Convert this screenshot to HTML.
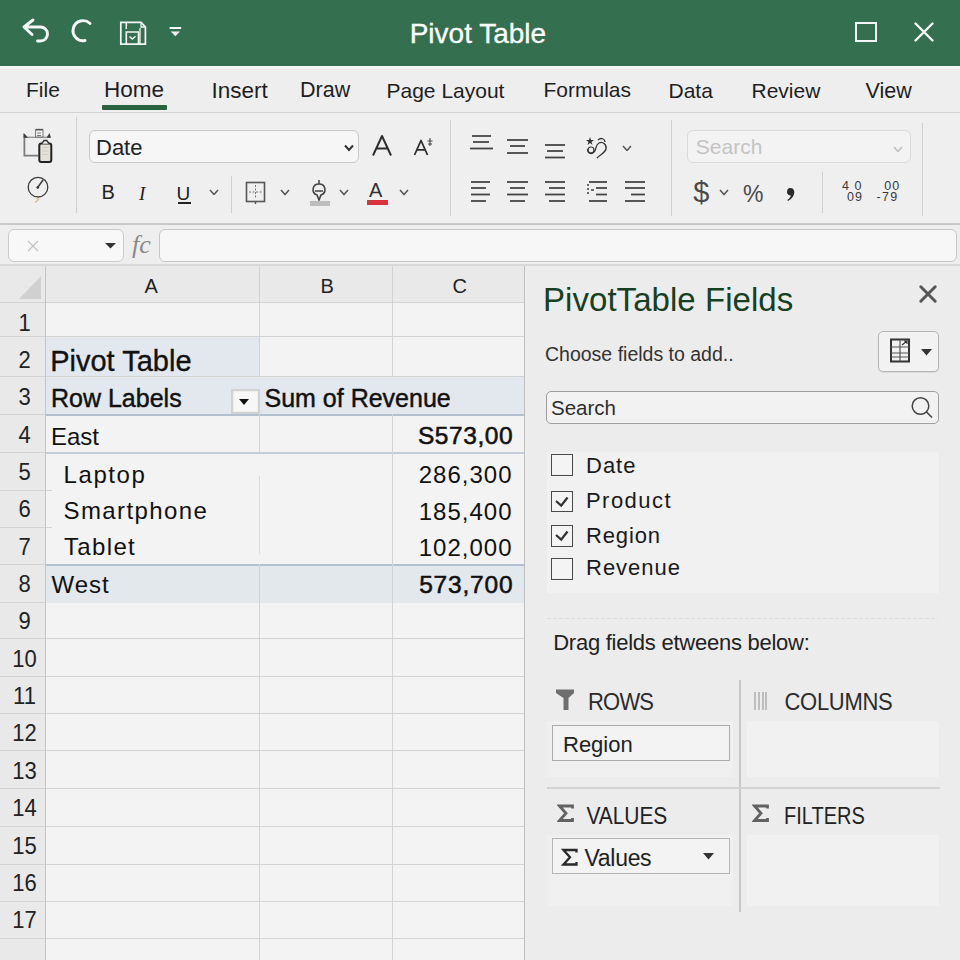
<!DOCTYPE html>
<html><head><meta charset="utf-8"><style>
html,body{margin:0;padding:0;width:960px;height:960px;overflow:hidden;background:#ebebeb}
body{position:relative;font-family:"Liberation Sans",sans-serif}
.t{position:absolute;line-height:1;white-space:pre;font-family:"Liberation Sans",sans-serif}
.r{position:absolute}
</style></head><body>
<div class="r" style="left:0px;top:0px;width:960px;height:66px;background:#346f50"></div>
<svg class="r" style="left:20px;top:16px;" width="34" height="30" viewBox="0 0 34 30"><path d="M13 4 L4 11 L12 18.5 M4 11 H20.5 A7 7 0 0 1 20.5 25 H17.5" fill="none" stroke="#f4f7f5" stroke-width="2.9" stroke-linecap="round" stroke-linejoin="round"/></svg>
<svg class="r" style="left:68px;top:16px;" width="30" height="30" viewBox="0 0 30 30"><path d="M22 7.5 A10 10 0 1 0 17 24.5" fill="none" stroke="#f4f7f5" stroke-width="2.9" stroke-linecap="round"/></svg>
<svg class="r" style="left:117px;top:19px;" width="32" height="28" viewBox="0 0 32 28"><path d="M3.8 3.4 H24 L28.4 7.8 V25.1 H3.8 Z" fill="none" stroke="#f4f7f5" stroke-width="1.7"/><path d="M24 3.4 V8 H28.4" fill="none" stroke="#f4f7f5" stroke-width="1.3"/><path d="M9.3 3.4 V10" stroke="#f4f7f5" stroke-width="1.5" fill="none"/><path d="M23 9 V25" stroke="#f4f7f5" stroke-width="1.3" fill="none"/><path d="M9.3 25.1 V13 H21.5 V25.1" fill="none" stroke="#f4f7f5" stroke-width="1.6"/><path d="M12.5 17.5 L15.3 20 L18.5 17.2" stroke="#f4f7f5" stroke-width="1.4" fill="none"/></svg>
<svg class="r" style="left:168px;top:24px;" width="16" height="14" viewBox="0 0 16 14"><rect x="1.6" y="3" width="11.6" height="2" fill="#f4f7f5"/><path d="M2.8 7.6 H12 L7.4 12.2 Z" fill="#f4f7f5"/></svg>
<div class="t" style="left:409.7px;top:19.8px;font-size:28px;color:#ffffff;font-weight:400;letter-spacing:0px;-webkit-text-stroke:0.3px #fff">Pivot Table</div>
<div class="r" style="left:855px;top:22px;width:22px;height:20px;border:2.5px solid #f4f7f5;box-sizing:border-box"></div>
<svg class="r" style="left:912px;top:20px;" width="24" height="24" viewBox="0 0 24 24"><path d="M3.5 3.5 L20.5 20.5 M20.5 3.5 L3.5 20.5" stroke="#f4f7f5" stroke-width="2.4" stroke-linecap="round"/></svg>
<div class="r" style="left:0px;top:66px;width:960px;height:46px;background:#eeeeee"></div>
<div class="r" style="left:0px;top:66px;width:960px;height:2px;background:#f8f8f8"></div>
<div class="r" style="left:0px;top:111.5px;width:960px;height:1.5px;background:#d2d2d2"></div>
<div class="t" style="left:26.0px;top:78.5px;font-size:21px;color:#1e1e1e;font-weight:400;letter-spacing:0px;">File</div>
<div class="t" style="left:104.0px;top:79.2px;font-size:22.5px;color:#1e1e1e;font-weight:400;letter-spacing:0px;">Home</div>
<div class="t" style="left:211.5px;top:79.5px;font-size:22.5px;color:#1e1e1e;font-weight:400;letter-spacing:0px;">Insert</div>
<div class="t" style="left:300.0px;top:80.4px;font-size:21.5px;color:#1e1e1e;font-weight:400;letter-spacing:0px;">Draw</div>
<div class="t" style="left:386.5px;top:79.5px;font-size:21px;color:#1e1e1e;font-weight:400;letter-spacing:0px;">Page Layout</div>
<div class="t" style="left:543.5px;top:78.7px;font-size:21px;color:#1e1e1e;font-weight:400;letter-spacing:0px;">Formulas</div>
<div class="t" style="left:668.5px;top:79.5px;font-size:21px;color:#1e1e1e;font-weight:400;letter-spacing:0px;">Data</div>
<div class="t" style="left:751.5px;top:79.5px;font-size:21px;color:#1e1e1e;font-weight:400;letter-spacing:0px;">Review</div>
<div class="t" style="left:865.5px;top:80.6px;font-size:21.5px;color:#1e1e1e;font-weight:400;letter-spacing:0px;">View</div>
<div class="r" style="left:102px;top:105px;width:65px;height:5px;background:#28623f;border-radius:1px"></div>
<div class="r" style="left:0px;top:113px;width:960px;height:111px;background:#efefef"></div>
<div class="r" style="left:0px;top:223.3px;width:960px;height:1.5px;background:#c9c9c9"></div>
<div class="r" style="left:76px;top:117px;width:1px;height:96px;background:#cfcfcf"></div>
<div class="r" style="left:231px;top:176px;width:1px;height:37px;background:#cfcfcf"></div>
<div class="r" style="left:450px;top:120px;width:1px;height:96px;background:#cfcfcf"></div>
<div class="r" style="left:671px;top:120px;width:1px;height:96px;background:#cfcfcf"></div>
<div class="r" style="left:822px;top:172px;width:1px;height:41px;background:#cfcfcf"></div>
<div class="r" style="left:922px;top:123px;width:1px;height:93px;background:#cfcfcf"></div>
<svg class="r" style="left:20px;top:125px;" width="36" height="40" viewBox="0 0 36 40"><path d="M4.4 9 V30.6 H18.5" fill="none" stroke="#7c7c7c" stroke-width="1.8"/><path d="M5 12.3 H30" stroke="#8a8a8a" stroke-width="1.2"/><path d="M3.6 8 L8.2 12.8 H3.6 Z" fill="#3c3c3c"/><path d="M29.5 8 L31 12.8 H26.5 Z" fill="#3c3c3c"/><rect x="15.5" y="5" width="7.5" height="7" fill="#f4f4f4" stroke="#777" stroke-width="1"/><path d="M15.5 4.5 H23" stroke="#555" stroke-width="1.3"/><path d="M17 8 H21 M17 10.5 H21" stroke="#666" stroke-width="0.9"/><rect x="19.3" y="18.5" width="12" height="18.5" rx="2" fill="#e4e1da" stroke="#222" stroke-width="2"/><path d="M21.8 18.7 L24 15.5 H26.8 L29 18.7" fill="#eee" stroke="#333" stroke-width="1.4"/><path d="M22 22.5 H28.5 M22 26 H28.5 M22 29.5 H28.5" stroke="#d0ccc2" stroke-width="1"/></svg>
<svg class="r" style="left:25px;top:174px;" width="28" height="32" viewBox="0 0 28 32"><circle cx="13" cy="13.2" r="9.8" fill="none" stroke="#3a3a3a" stroke-width="1.3"/><path d="M12.6 13.6 L18 6" stroke="#3a3a3a" stroke-width="1.6"/><circle cx="12.8" cy="13.4" r="1.3" fill="#333"/><path d="M11 23.5 L13.6 25.5 L10 28.5" stroke="#dcc09a" stroke-width="1.4" fill="none"/></svg>
<div class="r" style="left:89px;top:130px;width:270px;height:33px;background:#f6f6f6;border:1.3px solid #c9c9c9;border-radius:6px;box-sizing:border-box"></div>
<div class="t" style="left:96.0px;top:137.3px;font-size:22px;color:#222;font-weight:400;letter-spacing:0px;">Date</div>
<svg class="r" style="left:343px;top:143px;" width="12" height="10" viewBox="0 0 12 10"><path d="M2 2.5 L6 7 L10 2.5" stroke="#333" stroke-width="2" fill="none"/></svg>
<svg class="r" style="left:370px;top:133px;" width="24" height="26" viewBox="0 0 24 26"><path d="M3 22.5 L12 3 L21 22.5 M6.3 15.5 H17.7" fill="none" stroke="#2e2e2e" stroke-width="2" stroke-linejoin="round"/></svg>
<svg class="r" style="left:412px;top:138px;" width="18" height="19" viewBox="0 0 18 19"><path d="M2.5 17 L9 2.5 L15.5 17 M5 11.8 H13" fill="none" stroke="#2e2e2e" stroke-width="1.8" stroke-linejoin="round"/></svg>
<svg class="r" style="left:426px;top:137px;" width="8" height="10" viewBox="0 0 8 10"><path d="M4 1 V9 M1.5 4 H6.5 M2 7 H6" stroke="#444" stroke-width="1.1"/></svg>
<div class="t" style="left:101.5px;top:182.0px;font-size:20px;color:#222;font-weight:400;letter-spacing:0px;">B</div>
<div class="t" style="left:139.0px;top:183.9px;font-size:19px;color:#222;font-weight:400;letter-spacing:0px;font-style:italic;font-family:'Liberation Serif',serif">I</div>
<div class="t" style="left:176.5px;top:183.9px;font-size:19px;color:#222;font-weight:400;letter-spacing:0px;">U</div>
<div class="r" style="left:178px;top:202px;width:13px;height:1.5px;background:#222"></div>
<svg class="r" style="left:208.5px;top:188.5px;" width="10" height="6.5" viewBox="0 0 10 6.5"><path d="M1 1 L5.0 5.5 L9 1" stroke="#555" stroke-width="1.5" fill="none"/></svg>
<svg class="r" style="left:245px;top:181px;" width="22" height="24" viewBox="0 0 22 24"><rect x="1.5" y="1.5" width="18" height="19" fill="none" stroke="#555" stroke-width="1.6"/><path d="M10.5 4 V18 M4 11 H17" stroke="#777" stroke-width="1" stroke-dasharray="2 1.5"/><path d="M10.5 20.5 V23" stroke="#555" stroke-width="1.4"/></svg>
<svg class="r" style="left:280px;top:189px;" width="10" height="6.5" viewBox="0 0 10 6.5"><path d="M1 1 L5.0 5.5 L9 1" stroke="#555" stroke-width="1.5" fill="none"/></svg>
<svg class="r" style="left:308px;top:178px;" width="24" height="30" viewBox="0 0 24 30"><path d="M11 2 V6" stroke="#444" stroke-width="1.5"/><path d="M11 6 C4 6 3 15 9 17 L11 22 L13 17 C19 15 18 6 11 6 Z" fill="none" stroke="#444" stroke-width="1.6"/><path d="M7 13 H15" stroke="#444" stroke-width="1.5"/><rect x="2" y="23" width="20" height="5" fill="#bdbdbd"/></svg>
<svg class="r" style="left:338.5px;top:189px;" width="10" height="6.5" viewBox="0 0 10 6.5"><path d="M1 1 L5.0 5.5 L9 1" stroke="#555" stroke-width="1.5" fill="none"/></svg>
<div class="t" style="left:369.0px;top:180.1px;font-size:20px;color:#333;font-weight:400;letter-spacing:0px;">A</div>
<div class="r" style="left:367px;top:200px;width:21px;height:4.5px;background:#d9343c"></div>
<svg class="r" style="left:398.5px;top:189px;" width="10" height="6.5" viewBox="0 0 10 6.5"><path d="M1 1 L5.0 5.5 L9 1" stroke="#555" stroke-width="1.5" fill="none"/></svg>
<svg class="r" style="left:0px;top:0px;pointer-events:none" width="960" height="960" viewBox="0 0 960 960"><path d="M472 136 H491" stroke="#444" stroke-width="1.8"/><path d="M473 142 H489" stroke="#444" stroke-width="1.8"/><path d="M470 148.5 H493" stroke="#444" stroke-width="1.8"/></svg>
<svg class="r" style="left:0px;top:0px;pointer-events:none" width="960" height="960" viewBox="0 0 960 960"><path d="M507 140 H528" stroke="#444" stroke-width="1.8"/><path d="M510 146 H525" stroke="#444" stroke-width="1.8"/><path d="M507 153 H528" stroke="#444" stroke-width="1.8"/></svg>
<svg class="r" style="left:0px;top:0px;pointer-events:none" width="960" height="960" viewBox="0 0 960 960"><path d="M545 145 H565" stroke="#444" stroke-width="1.8"/><path d="M547 151 H563" stroke="#444" stroke-width="1.8"/><path d="M545 157.5 H565" stroke="#444" stroke-width="1.8"/></svg>
<svg class="r" style="left:0px;top:0px;pointer-events:none" width="960" height="960" viewBox="0 0 960 960"><path d="M471 182 H490" stroke="#444" stroke-width="1.8"/><path d="M471 188 H486" stroke="#444" stroke-width="1.8"/><path d="M471 194.5 H490" stroke="#444" stroke-width="1.8"/><path d="M471 201 H486" stroke="#444" stroke-width="1.8"/></svg>
<svg class="r" style="left:0px;top:0px;pointer-events:none" width="960" height="960" viewBox="0 0 960 960"><path d="M507 182 H528" stroke="#444" stroke-width="1.8"/><path d="M510 188 H525" stroke="#444" stroke-width="1.8"/><path d="M507 194.5 H528" stroke="#444" stroke-width="1.8"/><path d="M510 201 H525" stroke="#444" stroke-width="1.8"/></svg>
<svg class="r" style="left:0px;top:0px;pointer-events:none" width="960" height="960" viewBox="0 0 960 960"><path d="M545 182 H565" stroke="#444" stroke-width="1.8"/><path d="M549 188 H565" stroke="#444" stroke-width="1.8"/><path d="M545 194.5 H565" stroke="#444" stroke-width="1.8"/><path d="M549 201 H565" stroke="#444" stroke-width="1.8"/></svg>
<svg class="r" style="left:0px;top:0px;pointer-events:none" width="960" height="960" viewBox="0 0 960 960"><path d="M589 182 H607" stroke="#444" stroke-width="1.8"/><path d="M596 188 H607" stroke="#444" stroke-width="1.8"/><path d="M596 194.5 H607" stroke="#444" stroke-width="1.8"/><path d="M589 201 H607" stroke="#444" stroke-width="1.8"/></svg>
<svg class="r" style="left:0px;top:0px;pointer-events:none" width="960" height="960" viewBox="0 0 960 960"><path d="M625 182 H645" stroke="#444" stroke-width="1.8"/><path d="M625 188 H645" stroke="#444" stroke-width="1.8"/><path d="M631 194.5 H645" stroke="#444" stroke-width="1.8"/><path d="M625 201 H645" stroke="#444" stroke-width="1.8"/></svg>
<svg class="r" style="left:587px;top:183px;" width="8" height="14" viewBox="0 0 8 14"><path d="M1 1 V3 M1 5 V7 M1 9 V11 M4 7 H7" stroke="#444" stroke-width="1.6"/></svg>
<svg class="r" style="left:584px;top:133px;" width="28" height="27" viewBox="0 0 28 27"><path d="M6 4 L7 7 L10 7 L7.5 9 L8.5 12 L6 10 L3.5 12 L4.5 9 L2 7 L5 7 Z" fill="#333"/><path d="M4 16 C3 20 7 22 10 19 C13 16 11 12 15 10 C19 8 23 12 22 16 C21 20 17 21 13 25" fill="none" stroke="#333" stroke-width="1.3"/><path d="M14 7 C17 4 21 6 21 9" fill="none" stroke="#333" stroke-width="1.3"/><circle cx="7" cy="17" r="3" fill="none" stroke="#333" stroke-width="1.2"/></svg>
<svg class="r" style="left:621.5px;top:144.5px;" width="10" height="6.5" viewBox="0 0 10 6.5"><path d="M1 1 L5.0 5.5 L9 1" stroke="#555" stroke-width="1.5" fill="none"/></svg>
<div class="r" style="left:687px;top:130px;width:224px;height:33px;background:#f3f3f3;border:1.2px solid #dadada;border-radius:6px;box-sizing:border-box"></div>
<div class="t" style="left:695.8px;top:136.4px;font-size:21px;color:#c4c4c4;font-weight:400;letter-spacing:0px;">Search</div>
<svg class="r" style="left:893px;top:146px;" width="10" height="6.5" viewBox="0 0 10 6.5"><path d="M1 1 L5.0 5.5 L9 1" stroke="#bbb" stroke-width="1.4" fill="none"/></svg>
<div class="t" style="left:693.3px;top:178.2px;font-size:29px;color:#4a4a4a;font-weight:400;letter-spacing:0px;">$</div>
<svg class="r" style="left:719px;top:189px;" width="10" height="6.5" viewBox="0 0 10 6.5"><path d="M1 1 L5.0 5.5 L9 1" stroke="#555" stroke-width="1.5" fill="none"/></svg>
<div class="t" style="left:743.0px;top:183.1px;font-size:23px;color:#4a4a4a;font-weight:400;letter-spacing:0px;">%</div>
<svg class="r" style="left:783px;top:185px;" width="16" height="18" viewBox="0 0 16 18"><path d="M6.5 3 C9.5 2.5 11.5 4.5 11.3 7.5 C11 11 9 14 5 16 L4.3 15 C6.5 13.5 7.6 12 7.8 10.5 C5.5 10.5 4 9 4 7 C4 4.8 5 3.3 6.5 3 Z" fill="#2a2a2a"/></svg>
<div class="t" style="left:842.0px;top:180.1px;font-size:12.5px;color:#3a3a3a;font-weight:400;letter-spacing:1.0px;">4 0</div>
<div class="t" style="left:847.0px;top:190.6px;font-size:12.5px;color:#3a3a3a;font-weight:400;letter-spacing:1.0px;">09</div>
<div class="t" style="left:884.3px;top:180.1px;font-size:12.5px;color:#3a3a3a;font-weight:400;letter-spacing:1.0px;">00</div>
<div class="t" style="left:876.5px;top:190.6px;font-size:12.5px;color:#3a3a3a;font-weight:400;letter-spacing:1.3px;">-79</div>
<div class="r" style="left:0px;top:225px;width:960px;height:40px;background:#eeeeee"></div>
<div class="r" style="left:0px;top:264px;width:960px;height:2px;background:#d9d9d9"></div>
<div class="r" style="left:7.5px;top:229px;width:116.5px;height:33px;background:#f8f8f8;border:1.3px solid #cbcbcb;border-radius:6px;box-sizing:border-box"></div>
<svg class="r" style="left:26px;top:239px;" width="14" height="14" viewBox="0 0 14 14"><path d="M2 2 L12 12 M12 2 L2 12" stroke="#c5c5c5" stroke-width="1.4"/></svg>
<svg class="r" style="left:104px;top:242px;" width="13" height="7" viewBox="0 0 13 7"><path d="M1 1 H12 L6.5 6.5 Z" fill="#333"/></svg>
<div class="t" style="left:132.0px;top:232.2px;font-size:26px;color:#8a8a8a;font-weight:400;letter-spacing:0px;font-style:italic;font-family:'Liberation Serif',serif">fc</div>
<div class="r" style="left:159px;top:228.5px;width:798px;height:33.5px;background:#f7f7f7;border:1.3px solid #c6c6c6;border-radius:6px;box-sizing:border-box"></div>
<div class="r" style="left:0px;top:266px;width:525px;height:694px;background:#f3f3f3"></div>
<div class="r" style="left:0px;top:266px;width:525px;height:36px;background:#e9e9e9"></div>
<div class="r" style="left:0px;top:266px;width:45px;height:694px;background:#e9e9e9"></div>
<svg class="r" style="left:18px;top:275px;" width="24" height="25" viewBox="0 0 24 25"><path d="M23 1 V24 H1 Z" fill="#d0d0d0"/></svg>
<div class="r" style="left:46px;top:337px;width:213px;height:39px;background:#e2e8ed"></div>
<div class="r" style="left:46px;top:377px;width:478px;height:37px;background:#e2e8ed"></div>
<div class="r" style="left:46px;top:565px;width:478px;height:38px;background:#e3e8ec"></div>
<div class="r" style="left:0px;top:302px;width:524px;height:1px;background:#d3d3d3"></div>
<div class="r" style="left:0px;top:336px;width:524px;height:1px;background:#d3d3d3"></div>
<div class="r" style="left:0px;top:376px;width:524px;height:1px;background:#d3d3d3"></div>
<div class="r" style="left:0px;top:414px;width:46px;height:1px;background:#d3d3d3"></div>
<div class="r" style="left:46px;top:414px;width:478px;height:1.5px;background:#b5c0ce"></div>
<div class="r" style="left:0px;top:452px;width:46px;height:1px;background:#d3d3d3"></div>
<div class="r" style="left:46px;top:452px;width:478px;height:1.5px;background:#c3ccd8"></div>
<div class="r" style="left:0px;top:490px;width:52px;height:1px;background:#d3d3d3"></div>
<div class="r" style="left:0px;top:527px;width:52px;height:1px;background:#d3d3d3"></div>
<div class="r" style="left:0px;top:564px;width:46px;height:1px;background:#d3d3d3"></div>
<div class="r" style="left:46px;top:564px;width:478px;height:1.5px;background:#b5c0ce"></div>
<div class="r" style="left:0px;top:602px;width:46px;height:1px;background:#d3d3d3"></div>
<div class="r" style="left:0px;top:638px;width:524px;height:1px;background:#d3d3d3"></div>
<div class="r" style="left:0px;top:676px;width:524px;height:1px;background:#d3d3d3"></div>
<div class="r" style="left:0px;top:713px;width:524px;height:1px;background:#d3d3d3"></div>
<div class="r" style="left:0px;top:750px;width:524px;height:1px;background:#d3d3d3"></div>
<div class="r" style="left:0px;top:788px;width:524px;height:1px;background:#d3d3d3"></div>
<div class="r" style="left:0px;top:826px;width:524px;height:1px;background:#d3d3d3"></div>
<div class="r" style="left:0px;top:864px;width:524px;height:1px;background:#d3d3d3"></div>
<div class="r" style="left:0px;top:901px;width:524px;height:1px;background:#d3d3d3"></div>
<div class="r" style="left:0px;top:938px;width:524px;height:1px;background:#d3d3d3"></div>
<div class="r" style="left:45px;top:266px;width:1.2999999999999972px;height:694px;background:#c4c4c4"></div>
<div class="r" style="left:259px;top:266px;width:1px;height:111px;background:#d3d3d3"></div>
<div class="r" style="left:259px;top:414px;width:1px;height:39px;background:#d3d3d3"></div>
<div class="r" style="left:259px;top:476px;width:1px;height:78px;background:#dcdcdc"></div>
<div class="r" style="left:259px;top:564px;width:1px;height:396px;background:#d3d3d3"></div>
<div class="r" style="left:392px;top:266px;width:1px;height:111px;background:#d3d3d3"></div>
<div class="r" style="left:392px;top:414px;width:1px;height:546px;background:#d3d3d3"></div>
<div class="r" style="left:524px;top:266px;width:1.2000000000000455px;height:694px;background:#bfbfbf"></div>
<div class="t" style="left:144.5px;top:276.3px;font-size:20px;color:#222;font-weight:400;letter-spacing:0px;">A</div>
<div class="t" style="left:320.5px;top:276.3px;font-size:20px;color:#222;font-weight:400;letter-spacing:0px;">B</div>
<div class="t" style="left:452.5px;top:276.3px;font-size:20px;color:#222;font-weight:400;letter-spacing:0px;">C</div>
<div class="t" style="left:0;width:49px;text-align:center;top:312.6px;font-size:22px;color:#222;transform:scaleY(1.1);transform-origin:50% 84.6%">1</div>
<div class="t" style="left:0;width:49px;text-align:center;top:349.9px;font-size:22px;color:#222;transform:scaleY(1.1);transform-origin:50% 84.6%">2</div>
<div class="t" style="left:0;width:49px;text-align:center;top:387.3px;font-size:22px;color:#222;transform:scaleY(1.1);transform-origin:50% 84.6%">3</div>
<div class="t" style="left:0;width:49px;text-align:center;top:424.6px;font-size:22px;color:#222;transform:scaleY(1.1);transform-origin:50% 84.6%">4</div>
<div class="t" style="left:0;width:49px;text-align:center;top:462.0px;font-size:22px;color:#222;transform:scaleY(1.1);transform-origin:50% 84.6%">5</div>
<div class="t" style="left:0;width:49px;text-align:center;top:499.3px;font-size:22px;color:#222;transform:scaleY(1.1);transform-origin:50% 84.6%">6</div>
<div class="t" style="left:0;width:49px;text-align:center;top:536.7px;font-size:22px;color:#222;transform:scaleY(1.1);transform-origin:50% 84.6%">7</div>
<div class="t" style="left:0;width:49px;text-align:center;top:574.0px;font-size:22px;color:#222;transform:scaleY(1.1);transform-origin:50% 84.6%">8</div>
<div class="t" style="left:0;width:49px;text-align:center;top:611.4px;font-size:22px;color:#222;transform:scaleY(1.1);transform-origin:50% 84.6%">9</div>
<div class="t" style="left:0;width:49px;text-align:center;top:648.7px;font-size:22px;color:#222;transform:scaleY(1.1);transform-origin:50% 84.6%">10</div>
<div class="t" style="left:0;width:49px;text-align:center;top:686.1px;font-size:22px;color:#222;transform:scaleY(1.1);transform-origin:50% 84.6%">11</div>
<div class="t" style="left:0;width:49px;text-align:center;top:723.4px;font-size:22px;color:#222;transform:scaleY(1.1);transform-origin:50% 84.6%">12</div>
<div class="t" style="left:0;width:49px;text-align:center;top:760.8px;font-size:22px;color:#222;transform:scaleY(1.1);transform-origin:50% 84.6%">13</div>
<div class="t" style="left:0;width:49px;text-align:center;top:798.1px;font-size:22px;color:#222;transform:scaleY(1.1);transform-origin:50% 84.6%">14</div>
<div class="t" style="left:0;width:49px;text-align:center;top:835.5px;font-size:22px;color:#222;transform:scaleY(1.1);transform-origin:50% 84.6%">15</div>
<div class="t" style="left:0;width:49px;text-align:center;top:872.8px;font-size:22px;color:#222;transform:scaleY(1.1);transform-origin:50% 84.6%">16</div>
<div class="t" style="left:0;width:49px;text-align:center;top:910.2px;font-size:22px;color:#222;transform:scaleY(1.1);transform-origin:50% 84.6%">17</div>
<div class="t" style="left:50.2px;top:346.5px;font-size:29px;color:#111;font-weight:400;letter-spacing:0px;-webkit-text-stroke:0.35px #111">Pivot Table</div>
<div class="t" style="left:51.0px;top:386.0px;font-size:25px;color:#111;font-weight:400;letter-spacing:0px;-webkit-text-stroke:0.45px #111">Row Labels</div>
<div class="r" style="left:230.5px;top:388.5px;width:29.0px;height:25.0px;background:#f7f7f7;border:2.2px solid #d2d2d2;box-sizing:border-box;box-shadow:inset 0 0 0 0.6px #e6e6e6"></div>
<svg class="r" style="left:238px;top:398px;" width="12" height="8" viewBox="0 0 12 8"><path d="M1 1 H11 L6 7 Z" fill="#111"/></svg>
<div class="t" style="left:264.5px;top:386.0px;font-size:25px;color:#111;font-weight:400;letter-spacing:0px;-webkit-text-stroke:0.45px #111">Sum of Revenue</div>
<div class="t" style="left:51.0px;top:424.8px;font-size:24px;color:#111;font-weight:400;letter-spacing:0px;">East</div>
<div class="t" style="right:446.9px;top:424.2px;font-size:24.5px;color:#111;font-weight:400;letter-spacing:0.55px;-webkit-text-stroke:0.55px #111">S573,00</div>
<div class="t" style="left:63.5px;top:462.6px;font-size:24px;color:#111;font-weight:400;letter-spacing:1.6px;">Laptop</div>
<div class="t" style="left:63.5px;top:499.1px;font-size:24px;color:#111;font-weight:400;letter-spacing:1.4px;">Smartphone</div>
<div class="t" style="left:64.0px;top:535.0px;font-size:24px;color:#111;font-weight:400;letter-spacing:1.35px;">Tablet</div>
<div class="t" style="left:51.5px;top:573.3px;font-size:24px;color:#111;font-weight:400;letter-spacing:1.0px;">West</div>
<div class="t" style="right:447.5px;top:462.8px;font-size:24px;color:#111;font-weight:400;letter-spacing:1.0px;">286,300</div>
<div class="t" style="right:447.5px;top:499.5px;font-size:24px;color:#111;font-weight:400;letter-spacing:1.0px;">185,400</div>
<div class="t" style="right:447.5px;top:535.6px;font-size:24px;color:#111;font-weight:400;letter-spacing:1.0px;">102,000</div>
<div class="t" style="right:446.7px;top:573.2px;font-size:24.5px;color:#111;font-weight:400;letter-spacing:0.8px;-webkit-text-stroke:0.55px #111">573,700</div>
<div class="r" style="left:525.2px;top:266px;width:434.79999999999995px;height:694px;background:#ececec"></div>
<div class="t" style="left:543.0px;top:283.4px;font-size:33px;color:#173f22;font-weight:400;letter-spacing:0.05px;">PivotTable Fields</div>
<svg class="r" style="left:917px;top:283px;" width="22" height="22" viewBox="0 0 22 22"><path d="M3.8 3.8 L18.2 18.2 M18.2 3.8 L3.8 18.2" stroke="#555" stroke-width="3" stroke-linecap="round"/></svg>
<div class="t" style="left:545.0px;top:344.5px;font-size:19.5px;color:#333;font-weight:400;letter-spacing:0px;">Choose fields to add..</div>
<div class="r" style="left:878px;top:331px;width:61px;height:41px;background:#f2f2f2;border:1.4px solid #b4b4b4;border-radius:5px;box-sizing:border-box;box-shadow:0 1px 1px rgba(0,0,0,0.08)"></div>
<svg class="r" style="left:889px;top:338px;" width="22" height="26" viewBox="0 0 22 26"><rect x="2" y="1.5" width="18" height="22" fill="none" stroke="#333" stroke-width="2"/><path d="M2 9 H20 M11 1.5 V23.5 M2 15 H20 M2 19 H20" stroke="#555" stroke-width="1.2"/><path d="M13 7 L18 3 M15 3 H18 V6" stroke="#333" stroke-width="1.1" fill="none"/></svg>
<svg class="r" style="left:920px;top:348px;" width="13" height="9" viewBox="0 0 13 9"><path d="M1 1 H12 L6.5 7.5 Z" fill="#333"/></svg>
<div class="r" style="left:546px;top:391px;width:393px;height:33px;background:#f2f2f2;border:1.5px solid #9e9e9e;border-radius:5px;box-sizing:border-box"></div>
<div class="t" style="left:551.0px;top:398.0px;font-size:20.5px;color:#2e2e2e;font-weight:400;letter-spacing:0px;">Search</div>
<svg class="r" style="left:909px;top:394px;" width="28" height="30" viewBox="0 0 28 30"><circle cx="11.5" cy="12" r="8.3" fill="none" stroke="#444" stroke-width="1.5"/><path d="M17.5 18 L23 23.5" stroke="#444" stroke-width="1.6"/></svg>
<div class="r" style="left:546.5px;top:451.5px;width:392.5px;height:141.5px;background:#f1f1f1"></div>
<div class="r" style="left:551px;top:454.2px;width:22px;height:21.5px;border:1.4px solid #4a4a4a;background:#f4f4f4;box-sizing:border-box"></div>
<div class="t" style="left:586.0px;top:455.3px;font-size:22px;color:#1a1a1a;font-weight:400;letter-spacing:1.0px;">Date</div>
<div class="r" style="left:551px;top:490.5px;width:22px;height:21.5px;border:1.4px solid #4a4a4a;background:#f4f4f4;box-sizing:border-box"></div>
<svg class="r" style="left:551px;top:490.5px;" width="22" height="22" viewBox="0 0 22 22"><path d="M5 10 L10.2 14.6 L16.5 6.5" stroke="#333" stroke-width="2.3" fill="none"/></svg>
<div class="t" style="left:586.0px;top:490.3px;font-size:22px;color:#1a1a1a;font-weight:400;letter-spacing:1.45px;">Product</div>
<div class="r" style="left:551px;top:525px;width:22px;height:21.5px;border:1.4px solid #4a4a4a;background:#f4f4f4;box-sizing:border-box"></div>
<svg class="r" style="left:551px;top:525px;" width="22" height="22" viewBox="0 0 22 22"><path d="M5 10 L10.2 14.6 L16.5 6.5" stroke="#333" stroke-width="2.3" fill="none"/></svg>
<div class="t" style="left:586.0px;top:524.5px;font-size:22px;color:#1a1a1a;font-weight:400;letter-spacing:0.85px;">Region</div>
<div class="r" style="left:551px;top:558.3px;width:22px;height:21.5px;border:1.4px solid #4a4a4a;background:#f4f4f4;box-sizing:border-box"></div>
<div class="t" style="left:586.0px;top:557.2px;font-size:22px;color:#1a1a1a;font-weight:400;letter-spacing:1.0px;">Revenue</div>
<div class="r" style="left:547px;top:618px;width:391px;height:1px;background-image:linear-gradient(90deg,#dcdcdc 60%,transparent 60%);background-size:6px 1px"></div>
<div class="t" style="left:553.2px;top:632.1px;font-size:22px;color:#222;font-weight:400;letter-spacing:-0.25px;">Drag fields etweens below:</div>
<div class="r" style="left:546.5px;top:721px;width:186.5px;height:56px;background:#f0f0f0"></div>
<div class="r" style="left:747px;top:721px;width:191.5px;height:56px;background:#f1f1f1"></div>
<div class="r" style="left:546.5px;top:834.5px;width:186.5px;height:71.5px;background:#f0f0f0"></div>
<div class="r" style="left:747px;top:834.5px;width:191.5px;height:71.5px;background:#f1f1f1"></div>
<div class="r" style="left:739px;top:680px;width:1.6000000000000227px;height:232px;background:#c9c9c9"></div>
<div class="r" style="left:547px;top:786.5px;width:393px;height:2.0px;background:#d3d3d3"></div>
<svg class="r" style="left:554px;top:688px;" width="22" height="24" viewBox="0 0 22 24"><path d="M2 1.5 H20 V5 L14.5 10 V22 H9.5 V10 L2 5 Z" fill="#6e6e6e"/></svg>
<div class="t" style="left:588.0px;top:691.6px;font-size:22px;color:#2b2b2b;font-weight:400;letter-spacing:-0.8px;transform:scaleY(1.1);transform-origin:0 84.6%">ROWS</div>
<svg class="r" style="left:752px;top:690px;" width="18" height="22" viewBox="0 0 18 22"><path d="M3 2 V20 M7 2 V20 M11 2 V20 M14 2 V20" stroke="#bdbdbd" stroke-width="2"/></svg>
<div class="t" style="left:784.5px;top:691.6px;font-size:22px;color:#2b2b2b;font-weight:400;letter-spacing:-0.3px;transform:scaleY(1.1);transform-origin:0 84.6%">COLUMNS</div>
<div class="r" style="left:551.5px;top:724.5px;width:178.0px;height:36.0px;background:#f3f3f3;border:1.4px solid #ababab;box-sizing:border-box"></div>
<div class="t" style="left:563.0px;top:733.8px;font-size:22px;color:#222;font-weight:400;letter-spacing:0px;">Region</div>
<svg class="r" style="left:556.5px;top:804px;" width="18" height="19" viewBox="0 0 18 19"><path d="M15.5 4.5 V2 H2.5 L9 9.2 L2.5 16.5 H15.5 V14" fill="none" stroke="#626262" stroke-width="2.8" stroke-linejoin="miter"/></svg>
<div class="t" style="left:586.5px;top:805.8px;font-size:21px;color:#222;font-weight:400;letter-spacing:-0.1px;transform:scaleY(1.1);transform-origin:0 84.6%">VALUES</div>
<svg class="r" style="left:752px;top:804px;" width="18" height="19" viewBox="0 0 18 19"><path d="M15.5 4.5 V2 H2.5 L9 9.2 L2.5 16.5 H15.5 V14" fill="none" stroke="#626262" stroke-width="2.8" stroke-linejoin="miter"/></svg>
<div class="t" style="left:784.0px;top:806.6px;font-size:20px;color:#222;font-weight:400;letter-spacing:0px;transform:scaleY(1.17);transform-origin:0 84.6%">FILTERS</div>
<div class="r" style="left:551.5px;top:837.5px;width:178.0px;height:36.5px;background:#f3f3f3;border:1.3px solid #b5b5b5;box-sizing:border-box"></div>
<svg class="r" style="left:561px;top:848px;" width="18" height="19" viewBox="0 0 18 19"><path d="M15.5 4.5 V2 H2.5 L9 9.2 L2.5 16.5 H15.5 V14" fill="none" stroke="#2a2a2a" stroke-width="2.3" stroke-linejoin="miter"/></svg>
<div class="t" style="left:584.5px;top:846.7px;font-size:23px;color:#222;font-weight:400;letter-spacing:-0.3px;">Values</div>
<svg class="r" style="left:702px;top:852px;" width="13" height="9" viewBox="0 0 13 9"><path d="M1 1 H12 L6.5 7.5 Z" fill="#333"/></svg>
</body></html>
